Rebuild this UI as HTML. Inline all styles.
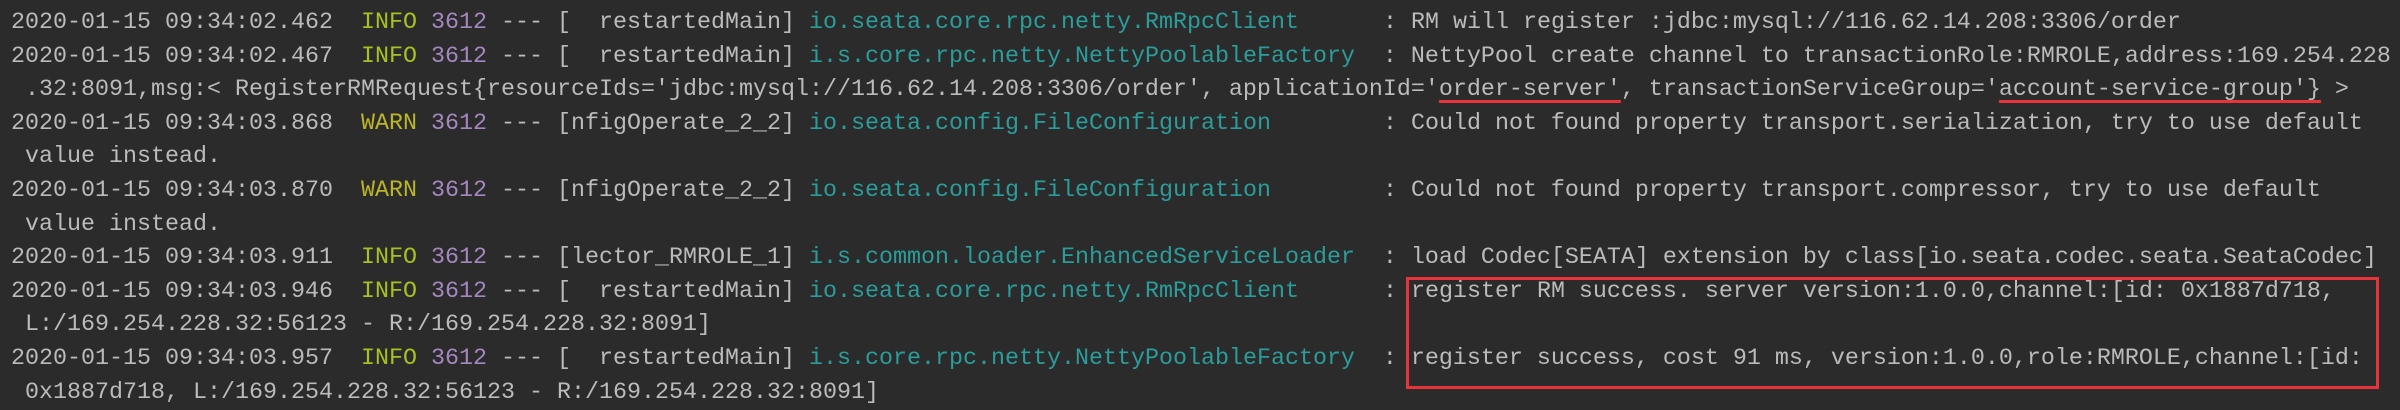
<!DOCTYPE html>
<html><head><meta charset="utf-8"><style>
html,body{margin:0;padding:0;background:#2b2b2b;}
body{width:2400px;height:410px;overflow:hidden;position:relative;}
.c{position:absolute;left:11px;top:7px;font-family:"Liberation Mono","DejaVu Sans Mono",monospace;font-size:23.33px;line-height:33.6px;color:#bbbbbb;white-space:pre;}
.i{color:#a8c023}.w{color:#bbb529}.p{color:#a587c0}.l{color:#2a9d9b}
.u{text-decoration:underline;text-decoration-color:#e8333a;text-decoration-thickness:3px;text-underline-offset:5px;}
.box{position:absolute;left:1406px;top:277px;width:967px;height:106px;border:3px solid #e8333a;}
</style></head><body>
<div class="c">2020-01-15 09:34:02.462  <span class="i">INFO</span> <span class="p">3612</span> --- [  restartedMain] <span class="l">io.seata.core.rpc.netty.RmRpcClient</span>      : RM will register :jdbc:mysql://116.62.14.208:3306/order
2020-01-15 09:34:02.467  <span class="i">INFO</span> <span class="p">3612</span> --- [  restartedMain] <span class="l">i.s.core.rpc.netty.NettyPoolableFactory</span>  : NettyPool create channel to transactionRole:RMROLE,address:169.254.228
 .32:8091,msg:&lt; RegisterRMRequest{resourceIds='jdbc:mysql://116.62.14.208:3306/order', applicationId='<span class="u">order-server'</span>, transactionServiceGroup='<span class="u">account-service-group'}</span> &gt;
2020-01-15 09:34:03.868  <span class="w">WARN</span> <span class="p">3612</span> --- [nfigOperate_2_2] <span class="l">io.seata.config.FileConfiguration</span>        : Could not found property transport.serialization, try to use default
 value instead.
2020-01-15 09:34:03.870  <span class="w">WARN</span> <span class="p">3612</span> --- [nfigOperate_2_2] <span class="l">io.seata.config.FileConfiguration</span>        : Could not found property transport.compressor, try to use default
 value instead.
2020-01-15 09:34:03.911  <span class="i">INFO</span> <span class="p">3612</span> --- [lector_RMROLE_1] <span class="l">i.s.common.loader.EnhancedServiceLoader</span>  : load Codec[SEATA] extension by class[io.seata.codec.seata.SeataCodec]
2020-01-15 09:34:03.946  <span class="i">INFO</span> <span class="p">3612</span> --- [  restartedMain] <span class="l">io.seata.core.rpc.netty.RmRpcClient</span>      : register RM success. server version:1.0.0,channel:[id: 0x1887d718,
 L:/169.254.228.32:56123 - R:/169.254.228.32:8091]
2020-01-15 09:34:03.957  <span class="i">INFO</span> <span class="p">3612</span> --- [  restartedMain] <span class="l">i.s.core.rpc.netty.NettyPoolableFactory</span>  : register success, cost 91 ms, version:1.0.0,role:RMROLE,channel:[id:
 0x1887d718, L:/169.254.228.32:56123 - R:/169.254.228.32:8091]</div>
<div class="box"></div>
</body></html>
